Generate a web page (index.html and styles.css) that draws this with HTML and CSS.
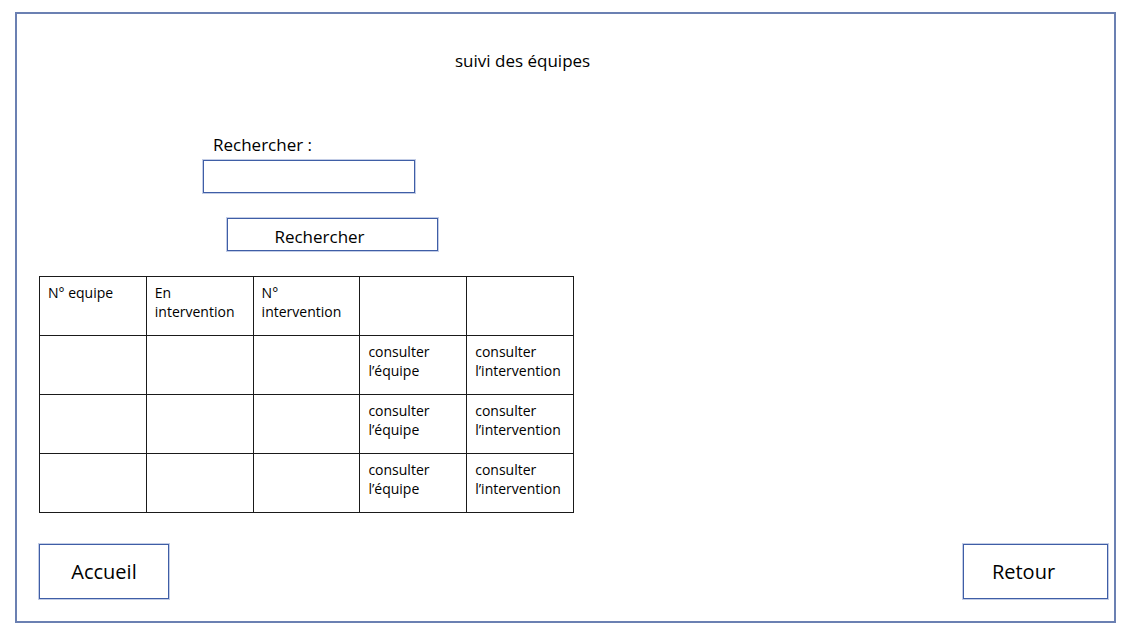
FILE: index.html
```html
<!DOCTYPE html>
<html lang="fr">
<head>
  <meta charset="UTF-8" />
  <meta name="viewport" content="width=device-width, initial-scale=1.0">
  <title>Suivi des équipes</title>
  <link rel="stylesheet" href="styles.css">
</head>
<body>
  <div class="frame">
    <h1 class="title">suivi des équipes</h1>

    <div class="search">
      <label for="search-input" class="search-label">Rechercher :</label>
      <input type="text" id="search-input" class="search-input">
      <button class="search-button">Rechercher</button>
    </div>

    <table class="teams">
      <tr>
        <td>N° equipe</td>
        <td>En<br>intervention</td>
        <td>N°<br>intervention</td>
        <td></td>
        <td></td>
      </tr>
      <tr>
        <td></td>
        <td></td>
        <td></td>
        <td>consulter<br>l’équipe</td>
        <td>consulter<br>l’intervention</td>
      </tr>
      <tr>
        <td></td>
        <td></td>
        <td></td>
        <td>consulter<br>l’équipe</td>
        <td>consulter<br>l’intervention</td>
      </tr>
      <tr>
        <td></td>
        <td></td>
        <td></td>
        <td>consulter<br>l’équipe</td>
        <td>consulter<br>l’intervention</td>
      </tr>
    </table>

    <div class="footer">
      <button class="nav-button home-button">Accueil</button>
      <button class="nav-button back-button">Retour</button>
    </div>
  </div>
</body>
</html>
```

FILE: styles.css
```css
body {
  margin: 0;
  font-family: "Open Sans", "Noto Sans", Arial, sans-serif;
  background-color: #fff;
  color: #000;
}
.frame {
  margin: 12px 0 0 15px;
  width: 1101px;
  height: 611px;
  box-sizing: border-box;
  border: 2px solid #6b80b2;
  padding: 0 6px 0 22px;
  display: flex;
  flex-direction: column;
}
.title {
  margin: 37px 0 0 416px;
  font-size: 17px;
  font-weight: normal;
  line-height: 20px;
}
.search {
  margin-top: 64px;
  display: flex;
  flex-direction: column;
  align-items: flex-start;
}
.search-label {
  margin-left: 174px;
  font-size: 17px;
  line-height: 20px;
}
.search-input {
  margin: 5px 0 0 164px;
  width: 212px;
  height: 33px;
  box-sizing: border-box;
  border: 1px solid #3f5ea6;
  box-shadow: 0 0 0 1px #c3cde6;
  font: inherit;
}
.search-button {
  margin: 25px 0 0 188px;
  width: 211px;
  height: 33px;
  border: 1px solid #3f5ea6;
  box-shadow: 0 0 0 1px #c3cde6;
  background: #fff;
  font-family: inherit;
  font-size: 17px;
  padding: 3px 26px 0 0;
  color: #000;
}
.teams {
  align-self: flex-start;
  margin-top: 25px;
  width: 535px;
  table-layout: fixed;
  border-collapse: collapse;
  font-size: 14px;
  line-height: 19px;
}
.teams td {
  height: 59px;
  box-sizing: border-box;
  border: 1px solid #1a1a1a;
  padding: 6px 8px 0;
  vertical-align: top;
}
.footer {
  margin-top: 31px;
  display: flex;
  justify-content: space-between;
}
.nav-button {
  height: 55px;
  border: 1px solid #3f5ea6;
  box-shadow: 0 0 0 1px #c3cde6;
  background: #fff;
  font-family: inherit;
  font-size: 20px;
  color: #000;
}
.home-button {
  width: 130px;
}
.back-button {
  width: 145px;
  padding-right: 30px;
}
```
